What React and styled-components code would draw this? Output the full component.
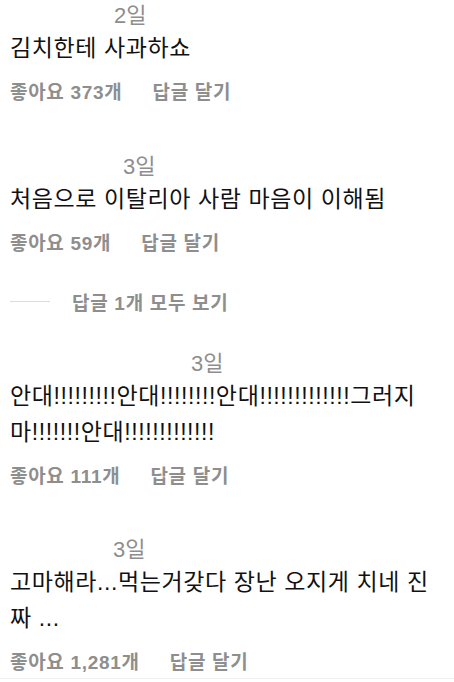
import React from "react";
import styled, { createGlobalStyle } from "styled-components";

const GlobalStyle = createGlobalStyle`
  body {
    margin: 0;
    background: #ffffff;
    font-family: "Liberation Sans", "Noto Sans CJK KR", sans-serif;
  }
`;

const List = styled.div`
  width: 454px;
  height: 679px;
  box-sizing: border-box;
  padding: 2px 14px 0 10px;
  border-bottom: 1px solid #efefef;
  overflow: hidden;
`;

const Comment = styled.div`
  display: flex;
  flex-direction: column;
  margin-bottom: ${(p) => p.gap}px;
`;

const Meta = styled.div`
  display: flex;
  align-items: center;
  height: 28px;
`;

// username is blanked out in the screenshot, only its width remains
const Name = styled.span`
  display: inline-block;
  width: ${(p) => p.w}px;
`;

const Time = styled.span`
  font-size: 22px;
  line-height: 28px;
  color: #8e8e8e;
`;

const Text = styled.div`
  font-size: 23px;
  letter-spacing: 0.6px;
  line-height: 36px;
  color: #111111;
  word-break: break-all;
`;

const Actions = styled.div`
  display: flex;
  gap: 30px;
  margin-top: 15px;
  font-size: 19px;
  letter-spacing: 0.7px;
  line-height: 24px;
  font-weight: 700;
  color: #8e8e8e;
`;

const Replies = styled.div`
  display: flex;
  align-items: center;
  gap: 22px;
  margin-bottom: 34px;
  font-size: 19px;
  letter-spacing: 0.7px;
  line-height: 24px;
  font-weight: 700;
  color: #8e8e8e;
`;

const Rule = styled.span`
  display: inline-block;
  width: 40px;
  height: 1px;
  margin-top: -6px;
  background: #dbdbdb;
`;

const comments = [
  { name: 104, time: "2일", text: "김치한테 사과하쇼", likes: "373", gap: 48 },
  {
    name: 113,
    time: "3일",
    text: "처음으로 이탈리아 사람 마음이 이해됨",
    likes: "59",
    gap: 36,
    replies: 1,
  },
  {
    name: 181,
    time: "3일",
    text: "안대!!!!!!!!!안대!!!!!!!!안대!!!!!!!!!!!!!그러지마!!!!!!!안대!!!!!!!!!!!!!",
    likes: "111",
    gap: 47,
  },
  {
    name: 103,
    time: "3일",
    text: "고마해라...먹는거갖다 장난 오지게 치네 진짜 ...",
    likes: "1,281",
    gap: 0,
  },
];

const App = () => {
  return (
    <>
      <GlobalStyle />
      <List>
        {comments.map((c, i) => (
          <React.Fragment key={i}>
            <Comment gap={c.gap}>
              <Meta>
                <Name w={c.name} />
                <Time>{c.time}</Time>
              </Meta>
              <Text>{c.text}</Text>
              <Actions>
                <span>좋아요 {c.likes}개</span>
                <span>답글 달기</span>
              </Actions>
            </Comment>
            {c.replies && (
              <Replies>
                <Rule />
                <span>답글 {c.replies}개 모두 보기</span>
              </Replies>
            )}
          </React.Fragment>
        ))}
      </List>
    </>
  );
};

export default App;
